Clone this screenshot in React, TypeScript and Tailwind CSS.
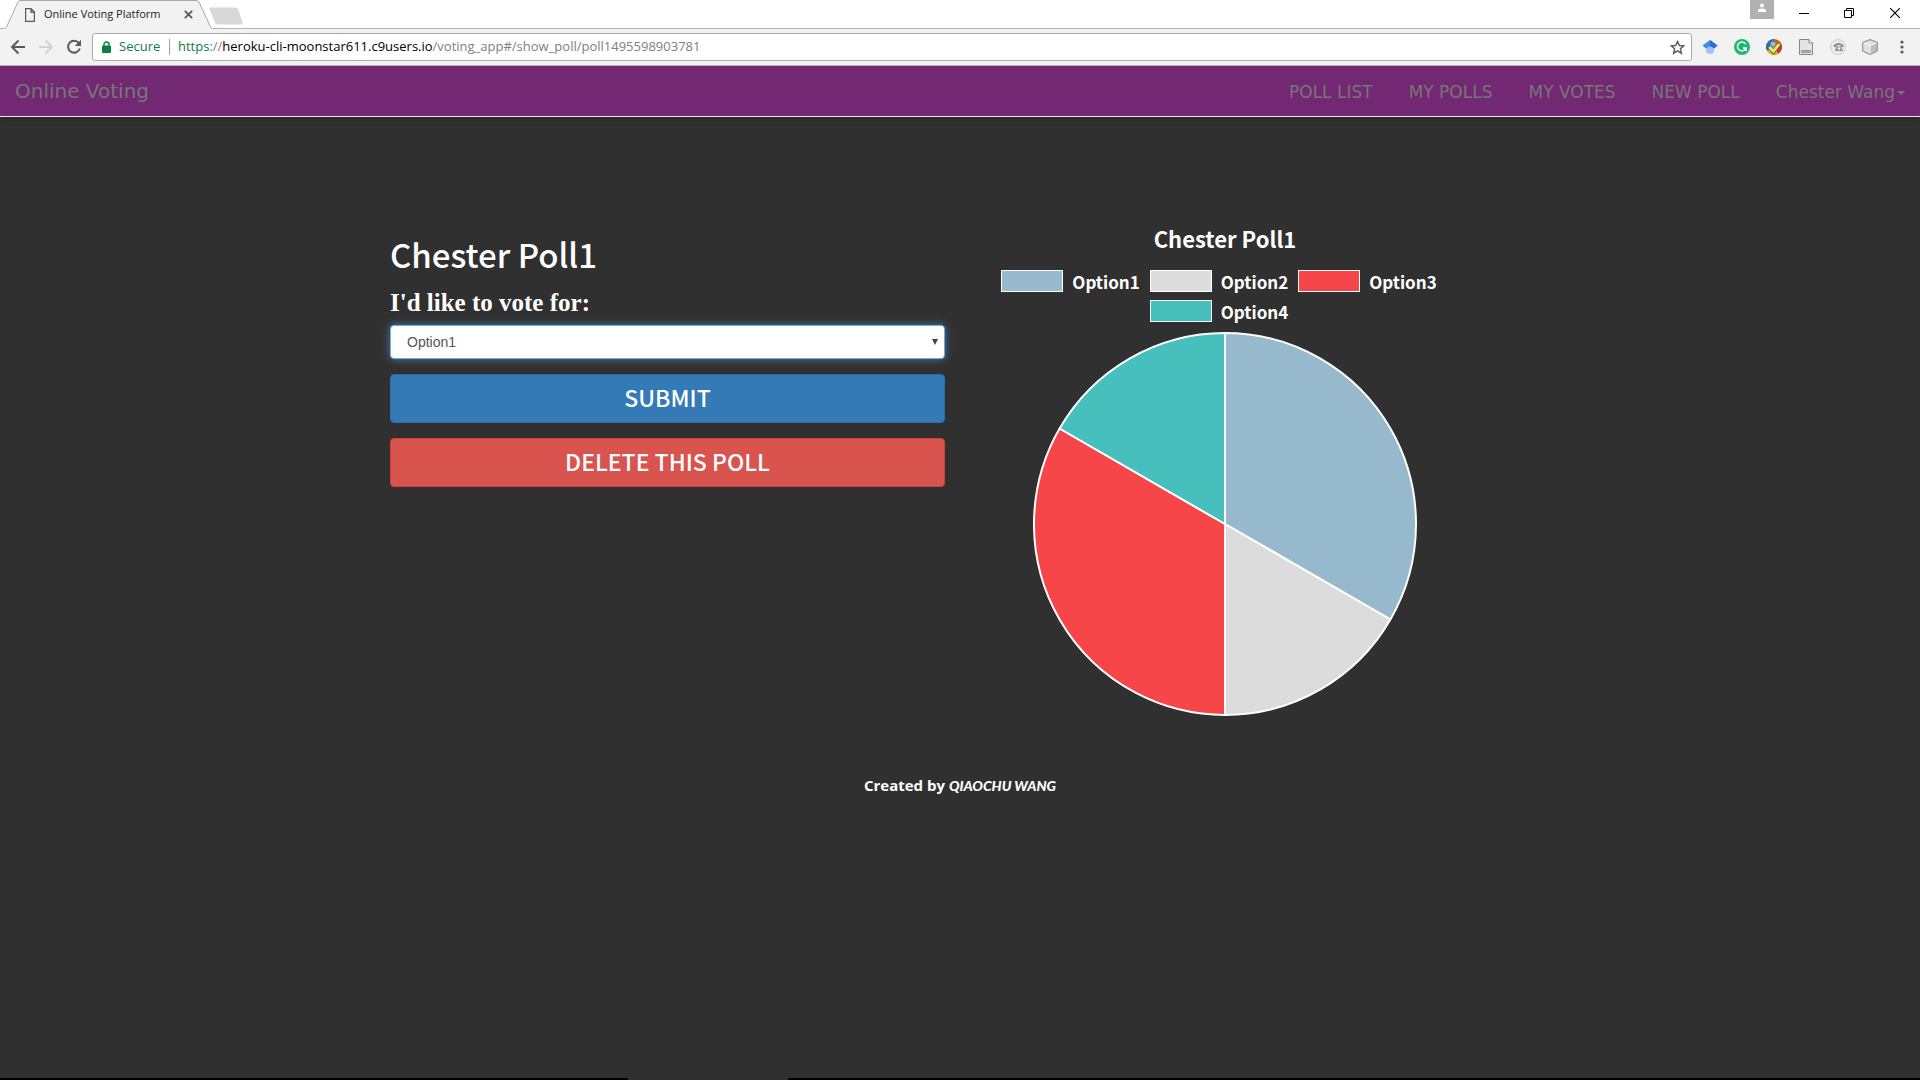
import { useState, type ReactNode } from "react";

const OPTIONS = [
  { label: "Option1", votes: 2, fill: "#97b9cd" },
  { label: "Option2", votes: 1, fill: "#dcdcdc" },
  { label: "Option3", votes: 2, fill: "#f7464a" },
  { label: "Option4", votes: 1, fill: "#46bfbd" },
];

const RADIUS = 191;
const CENTER = 192;

function slices() {
  const total = OPTIONS.reduce((sum, o) => sum + o.votes, 0);
  let start = 0;
  return OPTIONS.map((o) => {
    const end = start + (o.votes / total) * Math.PI * 2;
    const point = (a: number) =>
      `${CENTER + Math.sin(a) * RADIUS} ${CENTER - Math.cos(a) * RADIUS}`;
    const large = end - start > Math.PI ? 1 : 0;
    const d = `M${CENTER} ${CENTER}L${point(start)}A${RADIUS} ${RADIUS} 0 ${large} 1 ${point(end)}Z`;
    start = end;
    return { d, fill: o.fill, label: o.label };
  });
}

function TabStrip() {
  return (
    <div className="flex h-[29px] items-start border-b border-[#b4b4b4] bg-white font-['Open_Sans',sans-serif]">
      <div className="relative ml-[5px] flex h-[29px] w-[207px] shrink-0 items-center pl-5">
        <svg className="absolute inset-0" width="207" height="29" viewBox="0 0 207 29" aria-hidden="true">
          <path d="M0 29L1 28L13 2Q14 .5 15 .5H191Q193 .5 194 2L206 28L207 29Z" fill="#f2f2f2" />
          <path d="M0 28.5L1.500 27L13 2Q14 .5 15 .5H191Q193 .5 194 2L205.500 27L207 28.500" fill="none" stroke="#a9a9a9" />
        </svg>
        <svg className="relative shrink-0" width="10" height="14" viewBox="0 0 10 14" fill="none" stroke="#5a5a5a" strokeWidth="1.2" aria-hidden="true">
          <path d="M.6.6H6L9.400 4V13.400H.6ZM6 .6V4.300H9.400" />
        </svg>
        <span className="relative ml-[9px] w-[132px] text-[11px] text-[#222]">Online Voting Platform</span>
        <button type="button" aria-label="Close tab" className="relative ml-2">
          <svg width="9" height="9" viewBox="0 0 9 9" stroke="#555" strokeWidth="1.7">
            <path d="M.8.8L8.200 8.200M8.200.8L.8 8.200" />
          </svg>
        </button>
      </div>
      <button type="button" aria-label="New tab" className="-ml-[3px] mt-[7px]">
        <svg width="35" height="18" viewBox="0 0 35 18">
          <path d="M1.500.5H26.500Q28 .5 29 2L33.500 15Q34 17.500 32 17.500H8.500Q7 17.500 6 15.500L.5 2Q0 .5 1.500 .5Z" fill="#d8d8d8" />
        </svg>
      </button>
      <div className="ml-auto flex items-start">
        <div className="h-[19px] w-6 bg-[#b1b1b1]">
          <svg width="24" height="19" viewBox="0 0 24 19" fill="#fff" aria-hidden="true">
            <circle cx="12" cy="5.500" r="2" />
            <path d="M8 12V10.500Q8 8.500 12 8.500Q16 8.500 16 10.500V12Z" />
          </svg>
        </div>
        <button type="button" aria-label="Minimize" className="ml-[25px] mt-2">
          <svg width="10" height="10" viewBox="0 0 10 10" stroke="#000"><path d="M0 5.500H10" /></svg>
        </button>
        <button type="button" aria-label="Restore" className="ml-[35px] mt-2">
          <svg width="10" height="10" viewBox="0 0 10 10" fill="none" stroke="#000"><path d="M.5 2.500H7.500V9.500H.5ZM2.500 2.500V.5H9.500V7.500H7.500" /></svg>
        </button>
        <button type="button" aria-label="Close window" className="ml-9 mr-5 mt-2">
          <svg width="10" height="10" viewBox="0 0 10 10" stroke="#000" strokeWidth="1.1"><path d="M0 0L10 10M10 0L0 10" /></svg>
        </button>
      </div>
    </div>
  );
}

function IconButton({ label, children }: { label: string; children: ReactNode }) {
  return (
    <button type="button" aria-label={label} className="flex size-4 shrink-0 items-center justify-center">
      {children}
    </button>
  );
}

function Toolbar() {
  return (
    <div className="flex h-[37px] items-center border-b border-[#b8b5b8] bg-[#f2f2f2] pl-[10px] pr-[10px]">
      <div className="flex gap-3">
        <IconButton label="Back">
          <svg width="16" height="16" viewBox="0 0 16 16" fill="none" stroke="#5a5a5a" strokeWidth="2"><path d="M15 8H2.500M8.500 1.500L2 8L8.500 14.500" /></svg>
        </IconButton>
        <IconButton label="Forward">
          <svg width="16" height="16" viewBox="0 0 16 16" fill="none" stroke="#d2d2d2" strokeWidth="2"><path d="M1 8H13.500M7.500 1.500L14 8L7.500 14.500" /></svg>
        </IconButton>
        <IconButton label="Reload">
          <svg width="16" height="16" viewBox="0 0 16 16" fill="none" stroke="#5a5a5a" strokeWidth="2">
            <path d="M12.800 4A6 6 0 1 0 13.800 9.500" />
            <path d="M15 .8V7H8.800Z" fill="#5a5a5a" stroke="none" />
          </svg>
        </IconButton>
      </div>
      <div className="ml-[10px] flex h-7 flex-1 items-center rounded-[3px] border border-[#a9a9a9] bg-white pl-[9px] pr-[6px] font-['Open_Sans',sans-serif] text-[13px]">
        <svg width="9" height="12" viewBox="0 0 9 12" aria-hidden="true">
          <path d="M2 5V3.500A2.500 2.500 0 0 1 7 3.500V5" fill="none" stroke="#0b8043" strokeWidth="1.400" />
          <rect y="4.500" width="9" height="7.500" rx="1" fill="#0b8043" />
        </svg>
        <span className="ml-2 w-11 text-[#0b8043]">Secure</span>
        <span className="ml-[6px] h-4 w-px bg-[#a0a0a0]" />
        <span className="ml-2 whitespace-nowrap text-black">
          <span className="text-[#0b8043]">https</span>
          <span className="text-[#808080]">://</span>heroku-cli-moonstar611.c9users.io
          <span className="text-[#808080]">/voting_app#/show_poll/poll1495598903781</span>
        </span>
        <button type="button" aria-label="Bookmark this page" className="ml-auto">
          <svg width="15" height="15" viewBox="0 0 15 15" fill="none" stroke="#5a5a5a" strokeWidth="1.400">
            <path d="M7.500 1.500L9.300 5.500L13.700 5.900L10.400 8.800L11.400 13.200L7.500 10.900L3.600 13.200L4.600 8.800L1.300 5.900L5.700 5.500Z" />
          </svg>
        </button>
      </div>
      <div className="ml-[10px] flex gap-4">
        <IconButton label="Scholar">
          <svg width="16" height="16" viewBox="0 0 16 16">
            <path d="M4 7H12V11Q12 15 8 15Q4 15 4 11Z" fill="#a0c3ff" />
            <path d="M8 1L15.500 6.500L12 9.500Q8 5.500 4 9.500L.5 6.500Z" fill="#4285f4" />
            <path d="M8 1L15.500 6.500L12 9.500Q10 7 8 7Z" fill="#356ac3" />
          </svg>
        </IconButton>
        <IconButton label="Grammar checker">
          <svg width="16" height="16" viewBox="0 0 16 16">
            <circle cx="8" cy="8" r="8" fill="#1fb871" />
            <path d="M11.500 5A4.400 4.400 0 1 0 12 9H9M12 9V12" fill="none" stroke="#fff" strokeWidth="1.500" />
          </svg>
        </IconButton>
        <IconButton label="Link checker">
          <svg width="16" height="16" viewBox="0 0 16 16">
            <path d="M8 8L1 12A8 8 0 0 1 8 0Z" fill="#2a6fb5" />
            <path d="M8 8V0A8 8 0 0 1 15.500 5Z" fill="#e2541b" />
            <path d="M8 8L15.500 5A8 8 0 0 1 12 15Z" fill="#c23a2a" />
            <path d="M8 8L12 15A8 8 0 0 1 1 12Z" fill="#f0a020" />
            <circle cx="7" cy="5" r="2.500" fill="#8fbfe6" />
            <path d="M3 7.500L7.500 12.500L13.500 4.500" fill="none" stroke="#6c7a18" strokeWidth="4" />
            <path d="M3.300 8L7.500 12.200L13.200 5" fill="none" stroke="#dcf07a" strokeWidth="2.600" />
          </svg>
        </IconButton>
        <IconButton label="Page notes">
          <svg width="14" height="16" viewBox="0 0 14 16" fill="#e4e4e4" stroke="#858585">
            <path d="M.5.5H10L13.500 4V15.500H.5Z" />
            <path d="M10 .5V4H13.500" fill="#fff" />
            <path d="M2.500 11.500H11.500V13.500H2.500Z" fill="#b0b0b0" stroke="#999" />
          </svg>
        </IconButton>
        <IconButton label="Phone">
          <svg width="16" height="16" viewBox="0 0 16 16">
            <circle cx="8" cy="8" r="7.500" fill="#e9e9e9" stroke="#cfcfcf" />
            <path d="M3.500 6.500Q8 2 13.500 6V8H11V6.500Q8.500 5.500 6.500 6.500V8H4Z" fill="#8a8a8a" />
            <path d="M6.500 7.500H11L13 12H5Z" fill="#8f8f8f" />
            <circle cx="9" cy="9.600" r="1.400" fill="#eee" />
          </svg>
        </IconButton>
        <IconButton label="Package">
          <svg width="16" height="16" viewBox="0 0 16 16" stroke="#999" strokeLinejoin="round">
            <path d="M8 .6L15.400 3.500V12L8 15.400L.6 12V3.500Z" fill="#e0e0e0" />
            <path d="M8 6.500L15.400 3.500V12L8 15.400Z" fill="#bdbdbd" stroke="none" />
            <path d="M.6 3.500L8 6.500L15.400 3.500M8 6.500V15" fill="none" stroke="#f7f7f7" />
            <path d="M8 .6L15.400 3.500V12L8 15.400L.6 12V3.500Z" fill="none" />
          </svg>
        </IconButton>
        <IconButton label="Menu">
          <svg width="16" height="16" viewBox="0 0 16 16" fill="#5a5a5a">
            <circle cx="8" cy="3" r="1.600" />
            <circle cx="8" cy="8" r="1.600" />
            <circle cx="8" cy="13" r="1.600" />
          </svg>
        </IconButton>
      </div>
    </div>
  );
}

function SiteNav() {
  return (
    <nav className="flex h-[51px] items-center justify-between border-b border-[#e7e7e7] bg-[#722872] px-[15px] font-['DejaVu_Sans',sans-serif] text-[#777] shadow-md">
      <a href="#/" className="text-xl">Online Voting</a>
      <div className="flex items-center gap-9 pt-1 text-[17px]">
        <a href="#/polls">POLL LIST</a>
        <a href="#/my_polls">MY POLLS</a>
        <a href="#/my_votes">MY VOTES</a>
        <a href="#/new_poll">NEW POLL</a>
        <button type="button" className="flex items-center gap-[2px]">
          Chester Wang
          <svg width="8" height="4" viewBox="0 0 8 4" fill="#777" aria-hidden="true"><path d="M0 0H8L4 4Z" /></svg>
        </button>
      </div>
    </nav>
  );
}

function VoteForm() {
  const [choice, setChoice] = useState("Option1");
  return (
    <form className="flex flex-col px-[15px] pt-6" onSubmit={(e) => e.preventDefault()}>
      <h2 className="text-[33px] leading-10 font-medium">Chester Poll1</h2>
      <label htmlFor="choice" className="mt-4 font-['Liberation_Serif',serif] text-[25px] leading-[26px] font-bold">
        I'd like to vote for:
      </label>
      <div className="relative mt-[9px]">
        <select
          id="choice"
          value={choice}
          onChange={(e) => setChoice(e.target.value)}
          className="h-[34px] w-full appearance-none rounded border border-[#66afe9] bg-white px-4 font-['Liberation_Sans',sans-serif] text-sm text-[#555] shadow-[0_0_8px_rgba(102,175,233,0.6)] outline-none"
        >
          {OPTIONS.map((o) => (
            <option key={o.label}>{o.label}</option>
          ))}
        </select>
        <svg className="pointer-events-none absolute top-[14px] right-[7px]" width="6" height="6" viewBox="0 0 6 6" fill="#444" aria-hidden="true">
          <path d="M0 0H6L3 6Z" />
        </svg>
      </div>
      <button type="submit" className="mt-[15px] h-[49px] rounded border border-[#2e6da4] bg-[#337ab7] pb-[3px] text-[23px] leading-8 font-medium">
        SUBMIT
      </button>
      <button type="button" className="mt-[15px] h-[49px] rounded border border-[#d43f3a] bg-[#d9534f] pb-[3px] text-[23px] leading-8 font-medium">
        DELETE THIS POLL
      </button>
    </form>
  );
}

function PollChart() {
  return (
    <section className="px-[15px]">
      <div className="flex w-full max-w-[500px] flex-col items-center">
        <h3 className="mb-1 text-[22px] leading-[56px] font-bold">Chester Poll1</h3>
        <ul className="flex flex-wrap justify-center gap-x-[10px] gap-y-2 pr-[22px] pl-[10px] text-[17px] leading-5 font-bold">
          {OPTIONS.map((o) => (
            <li key={o.label} className="flex items-center gap-[9px]">
              <span className="h-[22px] w-[62px] border border-white" style={{ backgroundColor: o.fill }} />
              <span className="pt-[2px]">{o.label}</span>
            </li>
          ))}
        </ul>
        <svg className="mt-[10px]" width="384" height="384" viewBox="0 0 384 384" role="img" aria-label="Votes by option">
          {slices().map((s) => (
            <path key={s.label} d={s.d} fill={s.fill} stroke="#fff" strokeWidth="2" strokeLinejoin="bevel" />
          ))}
        </svg>
      </div>
    </section>
  );
}

export default function App() {
  return (
    <div className="flex min-h-screen flex-col bg-[#303030] font-['Noto_Sans_CJK_SC',sans-serif] text-white">
      <TabStrip />
      <Toolbar />
      <SiteNav />
      <main className="mx-auto mt-[93px] grid w-full max-w-[1170px] grid-cols-2">
        <VoteForm />
        <PollChart />
      </main>
      <footer className="mt-[57px] text-center font-['Open_Sans',sans-serif] text-[15px] leading-6 font-bold">
        Created by <span className="font-['Lato',cursive] text-sm leading-6 font-black italic">QIAOCHU WANG</span>
      </footer>
      <div className="mt-auto flex h-[2px] bg-black">
        <div className="ml-[628px] w-40 bg-[#303030]" />
      </div>
    </div>
  );
}
